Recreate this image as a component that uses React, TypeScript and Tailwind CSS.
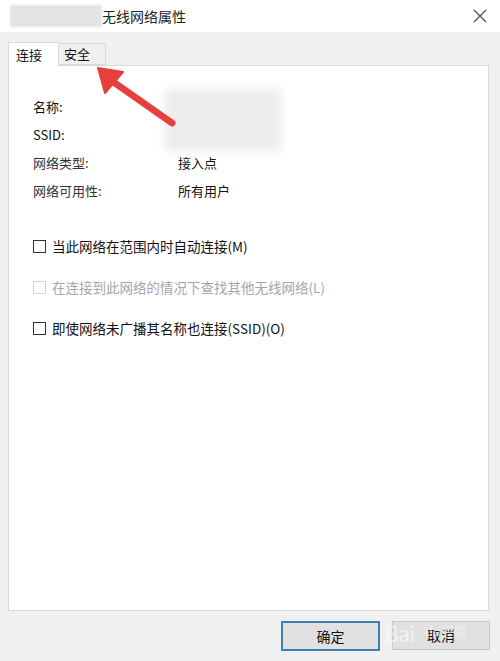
import React from 'react'

const font = { fontFamily: '"Noto Sans CJK SC", "Noto Sans", sans-serif' }

const Checkbox = ({ label, disabled }: { label: string; disabled?: boolean }) => (
  <label className="flex items-center h-[20px]">
    <span
      className={
        disabled
          ? 'w-[13px] h-[13px] border border-[#d4d4d4] bg-white'
          : 'w-[13px] h-[13px] border border-[#333] bg-white'
      }
    />
    <span className={disabled ? 'ml-[6px] text-[#a6a6a6]' : 'ml-[6px] text-[#111]'}>{label}</span>
  </label>
)

const Arrow = () => (
  <svg className="absolute left-0 top-0 pointer-events-none" width="500" height="200" viewBox="0 0 500 200">
    <line x1="172" y1="123" x2="112" y2="81" stroke="#e5403d" strokeWidth="7" strokeLinecap="round" />
    <polygon points="98,68 123,72 105,93" fill="#e5403d" stroke="#e5403d" strokeWidth="2" strokeLinejoin="round" />
  </svg>
)

export default function App() {
  return (
    <div className="relative w-[500px] h-[661px] bg-[#f0f0f0] flex flex-col text-[13px] text-[#111] overflow-hidden" style={font}>
      {/* title bar */}
      <div className="h-[32px] bg-white flex items-center shrink-0">
        <div className="ml-[10px] w-[92px] h-[22px] bg-[#e4e4e4] blur-[1px]" />
        <span className="text-[14px] text-[#222]">无线网络属性</span>
        <svg className="ml-auto mr-[13px]" width="14" height="14" viewBox="0 0 14 14">
          <path d="M1 1L13 13M13 1L1 13" stroke="#444" strokeWidth="1.1" />
        </svg>
      </div>

      {/* tabs */}
      <div className="flex items-end pl-[8px] pt-[10px] shrink-0">
        <div className="w-[51px] h-[24px] bg-white border border-b-0 border-[#d9d9d9] flex items-center pl-[7px] relative z-10 -mb-px">
          连接
        </div>
        <div className="w-[47px] h-[22px] bg-[#f0f0f0] border border-l-0 border-[#d9d9d9] flex items-center pl-[5px]">
          安全
        </div>
      </div>

      {/* panel */}
      <div className="ml-[8px] mr-[11px] h-[546px] bg-white border border-[#d9d9d9] pt-[28px] pl-[24px] shrink-0">
        <div className="grid grid-cols-[145px_1fr] auto-rows-[28px] items-center">
          <span className="-mt-[3px]">名称:</span>
          <div className="row-span-2 -ml-[13px] -mt-[4px] w-[116px] h-[62px] bg-[#ececec] blur-[4px]" />
          <span className="-mt-[3px]">SSID:</span>
          <span className="-mt-[3px] text-[#333]">网络类型:</span>
          <span className="-mt-[3px]">接入点</span>
          <span className="-mt-[3px] text-[#333]">网络可用性:</span>
          <span className="-mt-[3px]">所有用户</span>
        </div>
        <div className="flex flex-col gap-[21px] mt-[30px] text-[13.5px]">
          <Checkbox label="当此网络在范围内时自动连接(M)" />
          <Checkbox label="在连接到此网络的情况下查找其他无线网络(L)" disabled />
          <Checkbox label="即使网络未广播其名称也连接(SSID)(O)" />
        </div>
      </div>

      {/* buttons */}
      <div className="flex justify-end gap-[12px] mt-[10px] mr-[10px]">
        <button className="w-[99px] h-[30px] bg-[#e1e1e1] border-2 border-[#3c7fb1] text-[14px]">确定</button>
        <button className="relative w-[98px] h-[29px] bg-[#e1e1e1] border border-[#c8c8c8] text-[14px]">
          取消
          <span className="absolute -left-[8px] top-[1px] text-[21px] leading-none text-white/60 tracking-tight">Bai</span>
          <span className="absolute left-[32px] top-[2px] text-[13px] leading-none text-white/50">du经验</span>
        </button>
      </div>

      <Arrow />
    </div>
  )
}
